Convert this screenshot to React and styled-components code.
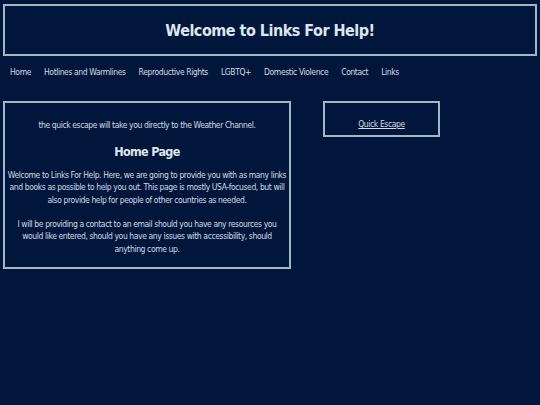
import React from "react";
import styled, { createGlobalStyle } from "styled-components";

const Global = createGlobalStyle`
  html, body { margin: 0; padding: 0; background: #00163a; }
  body {
    font-family: "DejaVu Sans Condensed", "DejaVu Sans", sans-serif;
    color: #d3dae8;
  }
`;

const Page = styled.div`
  padding: 4px 3px 0 3px;
  min-height: 405px;
  box-sizing: border-box;
`;

const Header = styled.header`
  border: 2px solid #a7b3c9;
  height: 52px;
  box-sizing: border-box;
  display: flex;
  align-items: center;
  justify-content: center;
`;

const Title = styled.h1`
  margin: 0;
  font-size: 16px;
  letter-spacing: -0.5px;
  font-weight: bold;
  color: #dfe5f0;
`;

const Nav = styled.nav`
  display: flex;
  gap: 13px;
  padding: 11px 7px 0;
  font-size: 8.5px;
  line-height: 10px;
  letter-spacing: -0.4px;
`;

const NavItem = styled.span`
  color: #d3dae8;
`;

const Main = styled.main`
  display: flex;
  align-items: flex-start;
  gap: 32px;
  margin-top: 24px;
`;

const ContentBox = styled.section`
  width: 288px;
  border: 2px solid #a7b3c9;
  box-sizing: border-box;
  padding: 16px 2px 12px;
  text-align: center;
  font-size: 8.5px;
  letter-spacing: -0.4px;
  line-height: 12.5px;
`;

const Para = styled.p`
  margin: 0 0 ${(p) => p.gap ?? 11.5}px;
  white-space: nowrap;
`;

const Heading = styled.h2`
  margin: 0 0 7.75px;
  font-size: 12.5px;
  letter-spacing: -0.7px;
  line-height: 18px;
  font-weight: bold;
  color: #dfe5f0;
`;

const EscapeBox = styled.div`
  width: 117px;
  height: 36px;
  border: 2px solid #a7b3c9;
  box-sizing: border-box;
  display: flex;
  align-items: flex-end;
  justify-content: center;
  padding-bottom: 6px;
  font-size: 8.5px;
  line-height: 10px;
  letter-spacing: -0.4px;
`;

const EscapeLink = styled.a`
  color: #d3dae8;
  text-decoration: underline;
`;

const navItems = [
  "Home",
  "Hotlines and Warmlines",
  "Reproductive Rights",
  "LGBTQ+",
  "Domestic Violence",
  "Contact",
  "Links",
];

export default function App() {
  return (
    <Page>
      <Global />
      <Header>
        <Title>Welcome to Links For Help!</Title>
      </Header>
      <Nav>
        {navItems.map((n) => (
          <NavItem key={n}>{n}</NavItem>
        ))}
      </Nav>
      <Main>
        <ContentBox>
          <Para>the quick escape will take you directly to the Weather Channel.</Para>
          <Heading>Home Page</Heading>
          <Para>
            Welcome to Links For Help. Here, we are going to provide you with as many links
            <br />
            and books as possible to help you out. This page is mostly USA-focused, but will
            <br />
            also provide help for people of other countries as needed.
          </Para>
          <Para gap={0}>
            I will be providing a contact to an email should you have any resources you
            <br />
            would like entered, should you have any issues with accessibility, should
            <br />
            anything come up.
          </Para>
        </ContentBox>
        <EscapeBox>
          <EscapeLink href="#">Quick Escape</EscapeLink>
        </EscapeBox>
      </Main>
    </Page>
  );
}
